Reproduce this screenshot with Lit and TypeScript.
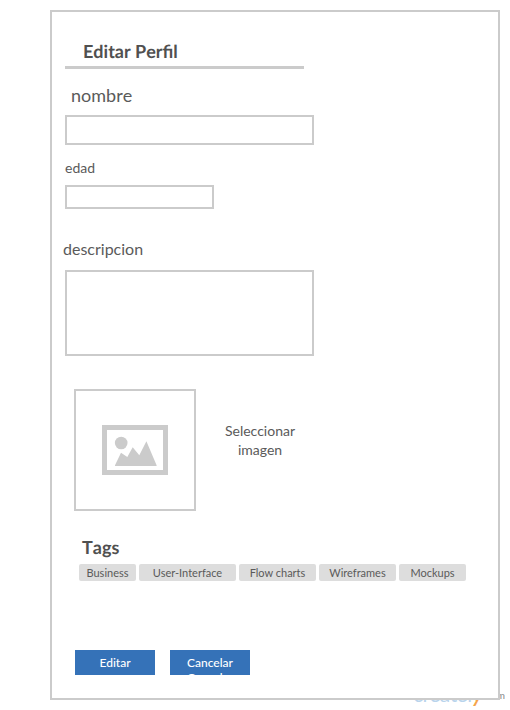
import { LitElement, html, css } from "lit";
import { customElement } from "lit/decorators.js";

const TAGS = [
  { name: "Business", width: 57 },
  { name: "User-Interface", width: 97 },
  { name: "Flow charts", width: 77 },
  { name: "Wireframes", width: 77 },
  { name: "Mockups", width: 67 },
];

@customElement("app-root")
export class AppRoot extends LitElement {
  static styles = css`
    :host {
      display: block;
      position: relative;
      box-sizing: border-box;
      width: 510px;
      height: 710px;
      padding: 10px 10px 10px 50px;
      overflow: hidden;
      background: #fff;
      color: #5a5a5a;
      font-family: Lato, sans-serif;
    }
    .frame {
      position: relative;
      box-sizing: border-box;
      height: 690px;
      border: 2px solid #cbcbcb;
      background: #fff;
      display: flex;
      flex-direction: column;
      align-items: flex-start;
      padding: 29px 0 0 13px;
    }
    .title, .tags-title {
      margin: 0;
      font-size: 18px;
      line-height: 20px;
      font-weight: 700;
      font-kerning: none;
      text-rendering: geometricPrecision;
      color: #505050;
    }
    .title { margin-left: 18px; }
    .rule {
      width: 239.4px;
      height: 3px;
      margin-top: 5px;
      background: #cbcbcb;
    }
    .label { display: block; white-space: nowrap; }
    .name { font-size: 18px; line-height: 20px; margin: 16px 0 0 6px; font-kerning: none; }
    .age { font-size: 14px; line-height: 16px; margin-top: 15px; }
    .about { font-size: 16px; line-height: 20px; margin: 30px 0 0 -2px; }
    .field {
      display: block;
      box-sizing: border-box;
      width: 249px;
      height: 30px;
      margin: 10px 0 0;
      padding: 2px 6px;
      border: 2px solid #cbcbcb;
      border-radius: 0;
      background: #fff;
      outline: none;
      resize: none;
      font: inherit;
    }
    .field.short { width: 149px; height: 24px; margin-top: 9px; }
    .field.tall { height: 86px; margin-top: 11px; }
    .picker {
      display: flex;
      align-items: flex-start;
      margin: 33px 0 0 9px;
    }
    .thumb {
      box-sizing: border-box;
      width: 122px;
      height: 122px;
      border: 2px solid #cbcbcb;
      display: flex;
      justify-content: center;
      padding-top: 34px;
    }
    .thumb svg { display: block; }
    .hint {
      width: 80px;
      margin: 32px 0 0 24px;
      font-size: 14px;
      line-height: 19px;
      text-align: center;
    }
    .tags-title { margin: 26px 0 0 17px; }
    .tags { display: flex; gap: 3px; margin: 7px 0 0 14px; }
    .tag {
      height: 17px;
      border-radius: 2px;
      background: #ddd;
      font-size: 11px;
      line-height: 18px;
      text-align: center;
      white-space: nowrap;
    }
    .actions { display: flex; gap: 15px; margin: 69px 0 0 10px; }
    .button {
      display: block;
      box-sizing: border-box;
      width: 80px;
      height: 25px;
      padding: 5px 10px 0;
      overflow: hidden;
      background: #3572b8;
      color: #fff;
      font-size: 12px;
      font-weight: 500;
      line-height: 15px;
      text-align: center;
    }
    .watermark {
      position: absolute;
      left: 413px;
      top: 678px;
      font-size: 21px;
      line-height: 28px;
      color: #b9d4ec;
      letter-spacing: -0.5px;
      white-space: nowrap;
    }
    .watermark .tail { color: #f5a54a; font-style: italic; font-size: 25px; font-weight: 500; }
    .domain {
      position: absolute;
      right: 5px;
      top: 689px;
      font-size: 10px;
      line-height: 12px;
      color: #888;
    }
  `;

  render() {
    return html`
      <div class="watermark">createl<span class="tail">y</span></div>
      <div class="domain">.com</div>
      <main class="frame">
        <h1 class="title">Editar Perfil</h1>
        <div class="rule"></div>
        <label class="label name" for="name">nombre</label>
        <input class="field" id="name" />
        <label class="label age" for="age">edad</label>
        <input class="field short" id="age" />
        <label class="label about" for="about">descripcion</label>
        <textarea class="field tall" id="about"></textarea>
        <section class="picker">
          <div class="thumb">
            <svg width="66" height="50" viewBox="0 0 66 50" fill="#cbcbcb">
              <path fill-rule="evenodd" d="M0 0H66V50H0ZM5 5V45H61V5Z" />
              <circle cx="19.2" cy="18" r="6.3" />
              <path d="M13 40.2L19 27.7L25.3 32L30.7 22.2L37.3 30.2L44.4 16.2L54.6 40.2V41H13Z" />
            </svg>
          </div>
          <div class="hint">Seleccionar imagen</div>
        </section>
        <h2 class="tags-title">Tags</h2>
        <div class="tags">
          ${TAGS.map((t) => html`<span class="tag" style="width:${t.width}px">${t.name}</span>`)}
        </div>
        <div class="actions">
          <div class="button" role="button">Editar</div>
          <div class="button" role="button">Cancelar Cancelar</div>
        </div>
      </main>
    `;
  }
}
